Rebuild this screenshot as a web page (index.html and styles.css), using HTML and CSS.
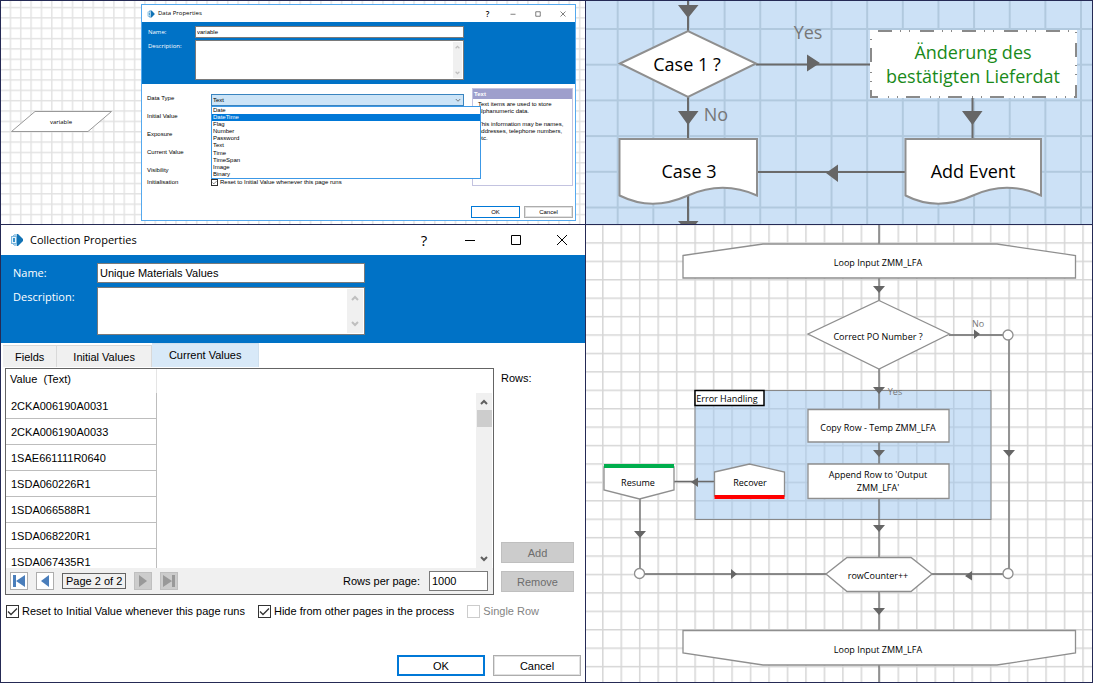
FILE: index.html
```
<!DOCTYPE html>
<html lang="en">
<head>
    <meta charset="UTF-8">
    <meta name="viewport" content="width=device-width, initial-scale=1.0">
    <title>Process Studio</title>
    <link rel="stylesheet" href="styles.css">
</head>
<body>

    <!-- shared shapes -->
    <svg class="defs" aria-hidden="true">
        <symbol id="logo" viewBox="0 0 14 14">
            <path d="M5 1h3l5 5v2l-5 5H5l-2-2V3z" fill="#1273b5"/>
            <path d="M1 3h6v8H1z" fill="#7db8df"/>
            <path d="M2 4h4v6H2z" fill="#e8f4fb"/>
            <path d="M3 5h2v4H3z" fill="#3a94cc"/>
            <path d="M4 1h3v2H4zM4 11h3v2H4z" fill="#a9d0ea"/>
        </symbol>
        <symbol id="min" viewBox="0 0 12 12"><path d="M1 6.500h10" stroke="#000" fill="none"/></symbol>
        <symbol id="max" viewBox="0 0 12 12"><path d="M1.500 1.500h9v9h-9z" stroke="#000" fill="none"/></symbol>
        <symbol id="close" viewBox="0 0 12 12"><path d="M1 1l10 10M11 1L1 11" stroke="#000" fill="none"/></symbol>
        <symbol id="up" viewBox="0 0 8 6"><path d="M1 5l3-3 3 3" stroke="currentColor" stroke-width="2" fill="none"/></symbol>
        <symbol id="down" viewBox="0 0 8 6"><path d="M1 1l3 3 3-3" stroke="currentColor" stroke-width="2" fill="none"/></symbol>
    </svg>

    <main class="board">

        <section class="panel canvas">
            <svg class="canvas-bg" viewBox="1 1 584 223" preserveAspectRatio="xMinYMin slice">
                <defs>
                    <pattern id="grid-s" x="9.600" y="6.800" width="10.350" height="10.350" patternUnits="userSpaceOnUse">
                        <path d="M.8 0v10.350M0 .8h10.350" stroke="#e2e2e2" stroke-width="1.400"/>
                    </pattern>
                </defs>
                <rect x="1" y="1" width="584" height="223" fill="url(#grid-s)"/>
                <path d="M35 111.500h76.500L88 131.500H11.500z" fill="#fff" stroke="#999"/>
                <text class="t-tiny" x="61" y="124">variable</text>
            </svg>

            <form class="dialog small">
                <header class="titlebar">
                    <svg class="logo"><use href="#logo"/></svg>
                    <h2>Data Properties</h2>
                    <button type="button" class="win" aria-label="Help">?</button>
                    <button type="button" class="win" aria-label="Minimize"><svg><use href="#min"/></svg></button>
                    <button type="button" class="win" aria-label="Maximize"><svg><use href="#max"/></svg></button>
                    <button type="button" class="win" aria-label="Close"><svg><use href="#close"/></svg></button>
                </header>
                <div class="banner">
                    <label for="d-name">Name:</label>
                    <input id="d-name" type="text" value="variable">
                    <label for="d-desc">Description:</label>
                    <div class="area">
                        <textarea id="d-desc"></textarea>
                        <div class="scroll off"><svg><use href="#up"/></svg><svg><use href="#down"/></svg></div>
                    </div>
                </div>
                <div class="data-body">
                    <div class="names">
                        <label for="d-type">Data Type</label>
                        <span>Initial Value</span>
                        <span>Exposure</span>
                        <span>Current Value</span>
                        <span>Visibility</span>
                        <span class="near">Initialisation</span>
                    </div>
                    <div class="values">
                        <div class="combo">
                            <select id="d-type"><option>Text</option></select>
                            <svg class="chev" viewBox="0 0 8 6"><path d="M1 1l3 3 3-3" stroke="#555" fill="none"/></svg>
                            <ul class="options">
                                <li>Date</li>
                                <li class="active">DateTime</li>
                                <li>Flag</li>
                                <li>Number</li>
                                <li>Password</li>
                                <li>Text</li>
                                <li>Time</li>
                                <li>TimeSpan</li>
                                <li>Image</li>
                                <li>Binary</li>
                            </ul>
                        </div>
                        <label class="check"><input type="checkbox" checked>Reset to Initial Value whenever this page runs</label>
                    </div>
                    <aside class="hint">
                        <h3>Text</h3>
                        <p>Text items are used to store alphanumeric data.</p>
                        <p>This information may be names, addresses, telephone numbers, etc.</p>
                    </aside>
                </div>
                <footer class="actions">
                    <button type="button" class="primary">OK</button>
                    <button type="button">Cancel</button>
                </footer>
            </form>
        </section>

        <section class="panel">
            <svg class="flow" viewBox="586 1 506 223" preserveAspectRatio="xMinYMin slice">
                <defs>
                    <pattern id="grid-l" x="616.700" y="28" width="35.640" height="35.700" patternUnits="userSpaceOnUse">
                        <path d="M1 0v36M0 1h36" stroke="#b1c9de" stroke-width="2"/>
                    </pattern>
                </defs>
                <rect x="586" y="1" width="507" height="224" fill="#cce1f6"/>
                <rect x="586" y="1" width="507" height="224" fill="url(#grid-l)"/>
                <g class="wire thick">
                    <path d="M688 1v30M688 97v42M688 195v30M756 64.500h115M757 172h149M972.500 97v42"/>
                </g>
                <g class="arrow">
                    <path d="M678 5h20.500L688 18zM678 111h20.500L688 125zM678 221h20.500l-5 6h-10zM807 54.500v17l13-8.500zM838 164.500v17.500l-12-9zM962 111h20.500l-10 14z"/>
                </g>
                <g class="node thick">
                    <path d="M620 63.500L688 31l68 32.500L688 97z"/>
                    <path d="M619.500 139H757v56.500c-22-10-44-11-69 0s-46 11-68.500 0z"/>
                    <path d="M905.500 139H1041v56.500c-22-10-44-11-68 0s-46 11-67.500 0z"/>
                </g>
                <rect x="871" y="31" width="205" height="66" fill="#fff" stroke="#fff" stroke-width="2"/>
                <rect x="871" y="31" width="205" height="66" fill="none" stroke="#8a8a8a" stroke-width="2" stroke-dasharray="14 8 1 8 1 10" stroke-dashoffset="-7"/>
                <g class="t-big">
                    <text x="687" y="71">Case 1 ?</text>
                    <text x="689" y="178">Case 3</text>
                    <text x="973" y="178">Add Event</text>
                    <text class="muted" x="808" y="39">Yes</text>
                    <text class="muted" x="716" y="121">No</text>
                    <text class="green" x="973" y="59">Änderung des</text>
                    <text class="green" x="973" y="83">bestätigten Lieferdat</text>
                </g>
            </svg>
        </section>

        <section class="panel">
            <form class="dialog large">
                <header class="titlebar">
                    <svg class="logo"><use href="#logo"/></svg>
                    <h2>Collection Properties</h2>
                    <button type="button" class="win" aria-label="Help">?</button>
                    <button type="button" class="win" aria-label="Minimize"><svg><use href="#min"/></svg></button>
                    <button type="button" class="win" aria-label="Maximize"><svg><use href="#max"/></svg></button>
                    <button type="button" class="win" aria-label="Close"><svg><use href="#close"/></svg></button>
                </header>
                <div class="banner">
                    <label for="c-name">Name:</label>
                    <input id="c-name" type="text" value="Unique Materials Values">
                    <label for="c-desc">Description:</label>
                    <div class="area">
                        <textarea id="c-desc"></textarea>
                        <div class="scroll off"><svg><use href="#up"/></svg><svg><use href="#down"/></svg></div>
                    </div>
                </div>
                <nav class="tabs">
                    <button type="button">Fields</button>
                    <button type="button">Initial Values</button>
                    <button type="button" class="current">Current Values</button>
                </nav>
                <div class="rows">
                    <div class="sheet">
                        <div class="sheet-body">
                            <table>
                                <thead><tr><th>Value &nbsp;(Text)</th></tr></thead>
                                <tbody>
                                    <tr><td>2CKA006190A0031</td></tr>
                                    <tr><td>2CKA006190A0033</td></tr>
                                    <tr><td>1SAE661111R0640</td></tr>
                                    <tr><td>1SDA060226R1</td></tr>
                                    <tr><td>1SDA066588R1</td></tr>
                                    <tr><td>1SDA068220R1</td></tr>
                                    <tr><td>1SDA067435R1</td></tr>
                                </tbody>
                            </table>
                            <div class="scroll">
                                <svg><use href="#up"/></svg>
                                <span class="thumb"></span>
                                <svg><use href="#down"/></svg>
                            </div>
                        </div>
                        <div class="pager">
                            <button type="button" aria-label="First page"><svg viewBox="0 0 14 14"><path d="M1 1h3v12H1zM13 1v12L4 7z"/></svg></button>
                            <button type="button" aria-label="Previous page"><svg viewBox="0 0 14 14"><path d="M11 1v12L3 7z"/></svg></button>
                            <output>Page 2 of 2</output>
                            <button type="button" disabled aria-label="Next page"><svg viewBox="0 0 14 14"><path d="M3 1v12l8-6z"/></svg></button>
                            <button type="button" disabled aria-label="Last page"><svg viewBox="0 0 14 14"><path d="M1 1v12l9-6zM10 1h3v12h-3z"/></svg></button>
                            <label for="per-page">Rows per page:</label>
                            <input id="per-page" type="text" value="1000">
                        </div>
                    </div>
                    <div class="side">
                        <span>Rows:</span>
                        <button type="button" disabled>Add</button>
                        <button type="button" disabled>Remove</button>
                    </div>
                </div>
                <div class="checks">
                    <label class="check"><input type="checkbox" checked>Reset to Initial Value whenever this page runs</label>
                    <label class="check"><input type="checkbox" checked>Hide from other pages in the process</label>
                    <label class="check off"><input type="checkbox" disabled>Single Row</label>
                </div>
                <footer class="actions">
                    <button type="button" class="primary">OK</button>
                    <button type="button">Cancel</button>
                </footer>
            </form>
        </section>

        <section class="panel">
            <svg class="flow" viewBox="586 225 506 457" preserveAspectRatio="xMinYMin slice">
                <defs>
                    <pattern id="grid-m" x="602" y="242.200" width="18.470" height="18.420" patternUnits="userSpaceOnUse">
                        <path d="M.8 0v18.500M0 .8h18.500" stroke="#d6d6d6" stroke-width="1.500"/>
                    </pattern>
                </defs>
                <rect x="586" y="225" width="507" height="458" fill="url(#grid-m)"/>
                <rect x="695" y="390.500" width="296" height="129" fill="#99c3ed" fill-opacity=".5" stroke="#888"/>
                <g class="wire">
                    <path d="M879 225v19M879 278v23M879 369v41M879 442v22M879 498v60M879 591v40M879 665v18"/>
                    <path d="M949 335h55M1009 340v229M931 574h73M645 574h181M640 499v70M674 481.500h41"/>
                </g>
                <g class="arrow">
                    <path d="M873 286h12l-6 7zM873 387h12l-6 7zM873 450h12l-6 7zM873 525h12l-6 7zM873 608h12l-6 7z"/>
                    <path d="M1003 450h12l-6 7zM634 531h12l-6 7zM974 329.500v9.500l6-5zM731 569v10l6-5zM972 571v9.500l-7-4.500zM698 477.500v9.500l-7-5z"/>
                </g>
                <g class="node">
                    <path d="M683 255.500l80-11.500h234l78.500 11.500V278H683z"/>
                    <path d="M879 300.500l70.500 33.500L879 369l-71-35z"/>
                    <path d="M808 409.500h141V442H808z"/>
                    <path d="M808 464h141v34.500H808z"/>
                    <path d="M714.500 472l35-8 35 8v24h-70z"/>
                    <path d="M604 467h70v23l-34.500 9-35.500-9z"/>
                    <path d="M826 574l21-16.500h64l21 16.500-21 17.500h-64z"/>
                    <path d="M683 630.500h392.500V653L997 665H763l-80-12z"/>
                    <circle cx="1008" cy="335" r="5"/>
                    <circle cx="1008" cy="573.500" r="5"/>
                    <circle cx="639.500" cy="573.500" r="5"/>
                </g>
                <path d="M604 464h70v4h-70z" fill="#00ae4d"/>
                <path d="M714.500 495h70v4h-70z" fill="#f00"/>
                <rect x="695" y="390.500" width="69" height="15" fill="#fff" stroke="#000" stroke-width="1.500"/>
                <g class="t-small">
                    <text x="878" y="266">Loop Input ZMM_LFA</text>
                    <text x="878" y="340">Correct PO Number ?</text>
                    <text x="727" y="402">Error Handling</text>
                    <text x="878" y="431">Copy Row - Temp ZMM_LFA</text>
                    <text x="878" y="478">Append Row to 'Output</text>
                    <text x="878" y="491">ZMM_LFA'</text>
                    <text x="638" y="486">Resume</text>
                    <text x="750" y="486">Recover</text>
                    <text x="878" y="579">rowCounter++</text>
                    <text x="878" y="653">Loop Input ZMM_LFA</text>
                    <text class="muted" x="978" y="327">No</text>
                    <text class="muted" x="895" y="395">Yes</text>
                </g>
            </svg>
        </section>

    </main>

</body>
</html>
```
FILE: styles.css
```
* {
    box-sizing: border-box;
}

body {
    margin: 0;
    background: #252a55;
    color: #000;
    font-family: "Liberation Sans", Arial, sans-serif;
}

.defs {
    position: absolute;
    width: 0;
    height: 0;
}

.board {
    display: grid;
    grid-template-columns: 584fr 506fr;
    grid-template-rows: 223fr 457fr;
    gap: 1px;
    padding: 1px;
    height: 100vh;
}

.panel {
    min-width: 0;
    min-height: 0;
    overflow: hidden;
    background: #fff;
}

.flow {
    display: block;
    width: 100%;
    height: 100%;
}

.canvas {
    position: relative;
    display: flex;
    padding: 3px 9px 3px 140px;
}

.canvas-bg {
    position: absolute;
    inset: 0;
    width: 100%;
    height: 100%;
}

/* flow chart */
.wire {
    fill: none;
    stroke: #6a6a6a;
    stroke-width: 1.3;
}

.node {
    fill: #fff;
    stroke: #8f8f8f;
    stroke-width: 1.3;
}

.wire.thick, .node.thick {
    stroke-width: 2;
}

.arrow {
    fill: #666;
}

text {
    text-anchor: middle;
    font-family: "Open Sans", sans-serif;
}

.t-tiny { font-size: 6px; }
.t-small { font-size: 9px; }
.t-big { font-size: 18px; }

.muted { fill: #777; }
.green { fill: #1a8a1a; }

/* dialogs */
.dialog {
    position: relative;
    display: flex;
    flex-direction: column;
    flex: 1;
    background: #fff;
}

.dialog input, .dialog textarea, .dialog select, .dialog button {
    font: inherit;
    color: inherit;
    border-radius: 0;
    margin: 0;
}

.titlebar {
    display: flex;
    align-items: center;
    flex: none;
}

.titlebar h2 {
    flex: 1;
    margin: 0;
    font-family: "Open Sans", sans-serif;
    font-weight: normal;
}

.win {
    display: flex;
    align-items: center;
    justify-content: center;
    padding: 0;
    border: 0;
    background: none;
}

.titlebar .win {
    font-family: "Open Sans", sans-serif;
}

.banner {
    display: grid;
    flex: none;
    align-content: start;
    background: #0072c6;
}

.banner label {
    color: #fff;
    font-family: "Open Sans", sans-serif;
}

.banner > input, .area {
    border: 1px solid #7a7a7a;
    background: #fff;
}

.area {
    display: flex;
    padding: 1px;
}

.area textarea {
    flex: 1;
    min-width: 0;
    border: 0;
    resize: none;
    overflow: hidden;
}

.scroll {
    display: flex;
    flex-direction: column;
    justify-content: space-between;
    align-items: center;
    background: #f0f0f0;
    color: #606060;
}

.scroll.off {
    color: #bfbfbf;
}

.check {
    display: flex;
    align-items: center;
    white-space: nowrap;
}

.check .dialog input, .check input {
    appearance: none;
    flex: none;
    border: 1px solid #333;
    background: #fff;
}

.check input:checked {
    background: #fff url("data:image/svg+xml,%3Csvg xmlns='http://www.w3.org/2000/svg' viewBox='0 0 11 11'%3E%3Cpath d='M1 5.500l3 3 6-6' fill='none' stroke='%23333' stroke-width='1.300'/%3E%3C/svg%3E");
}

.check.off {
    color: #838383;
}

.check.off input {
    border-color: #ccc;
}

.actions {
    display: flex;
    justify-content: flex-end;
    margin-top: auto;
}

.actions button {
    padding: 0;
    border: 1px solid #adadad;
    background: #fff;
    box-shadow: inset 0 0 0 1px #e1e1e1;
}

.actions .primary {
    border: 2px solid #0078d7;
    box-shadow: none;
}

/* data properties */
.small {
    border: 1px solid #55a9ee;
    font-size: 6px;
    line-height: 7px;
}

.small .titlebar {
    height: 17px;
    padding-left: 5px;
}

.small .logo {
    width: 8px;
    height: 8px;
    margin-right: 3px;
}

.small h2, .small .banner label {
    font-size: 6px;
}

.small .win {
    width: 25px;
    height: 16px;
    font-size: 8px;
    font-weight: 600;
}

.small .win svg {
    width: 6px;
    height: 6px;
}

.small .banner {
    grid-template-columns: 47px 269px;
    gap: 2px 0;
    height: 62px;
    padding: 4px 6px;
}

.small .banner label {
    line-height: 12px;
}

.small .banner > input {
    height: 12px;
    padding: 0 1px;
}

.small .area {
    height: 40px;
}

.small .scroll {
    width: 9px;
    padding: 3px 0;
}

.small .scroll svg {
    width: 5px;
    height: 4px;
}

.data-body {
    display: flex;
    padding: 4px 2px 0 5px;
}

.names {
    display: flex;
    flex-direction: column;
    gap: 11px;
    width: 64px;
    padding-top: 7px;
}

.names .near {
    margin-top: -6px;
}

.values {
    display: flex;
    flex-direction: column;
    justify-content: space-between;
    width: 253px;
    height: 98px;
    padding-top: 6px;
}

.combo {
    position: relative;
}

.combo select {
    display: block;
    appearance: none;
    width: 100%;
    height: 12px;
    padding: 0 1px;
    border: 1px solid #3a85c0;
    background: #cce4f7;
}

.chev {
    position: absolute;
    top: 4px;
    right: 3px;
    width: 6px;
    height: 5px;
}

.options {
    position: absolute;
    z-index: 1;
    top: 12px;
    left: 0;
    display: flex;
    flex-direction: column;
    width: 270px;
    height: 73px;
    margin: 0;
    padding: 0;
    border: 1px solid #3c98e6;
    background: #fff;
    list-style: none;
}

.options li {
    flex: 1;
    padding-left: 1px;
}

.options .active {
    background: #0078d7;
    color: #fff;
}

.small .check input {
    width: 7px;
    height: 7px;
    margin-right: 2px;
}

.hint {
    flex: 1;
    height: 98px;
    margin-left: 8px;
    border: 1px solid #c3c3e0;
}

.hint h3 {
    margin: 0 0 2px;
    padding-left: 1px;
    background: #9e9fcc;
    color: #fff;
    font-size: 6px;
    line-height: 10px;
}

.hint p {
    margin: 0 2px 6px 5px;
}

.small .actions {
    gap: 4px;
    padding: 0 2px 2px;
}

.small .actions button {
    width: 49px;
    height: 12px;
}

.small .actions .primary {
    border-width: 1px;
}

/* collection properties */
.large {
    height: 100%;
    font-size: 11px;
    line-height: 16px;
}

.large .titlebar {
    height: 30px;
    padding-left: 9px;
}

.large .logo {
    width: 14px;
    height: 14px;
    margin-right: 6px;
}

.large h2, .large .banner label {
    font-size: 11px;
}

.large .win {
    width: 46px;
    height: 30px;
    font-size: 15px;
}

.large .win svg {
    width: 12px;
    height: 12px;
}

.large .banner {
    grid-template-columns: 84px 268px;
    gap: 4px 0;
    height: 88px;
    padding: 8px 12px;
}

.large .banner label {
    line-height: 20px;
}

.large .banner > input {
    height: 20px;
    padding: 0 2px;
}

.large .area {
    height: 48px;
}

.large .scroll {
    width: 16px;
    padding: 6px 0;
}

.large .scroll svg {
    width: 8px;
    height: 6px;
}

.tabs {
    display: flex;
    align-items: flex-end;
    height: 25px;
    padding: 0 2px 1px;
}

.tabs button {
    height: 22px;
    padding: 0 16px;
    border: 1px solid #d9d9d9;
    border-width: 1px 1px 0 0;
    background: #f0f0f0;
}

.tabs button:first-child {
    padding: 0 12px;
}

.tabs .current {
    height: 24px;
    padding: 0 17px 2px;
    border-color: #cfe0ee;
    background: #d8e9f8;
}

.rows {
    display: flex;
    gap: 7px;
    padding: 0 11px 0 4px;
}

.sheet {
    flex: 1;
    border: 1px solid #646464;
}

.sheet-body {
    display: flex;
    justify-content: space-between;
    height: 199px;
    overflow: hidden;
}

.sheet table {
    align-self: flex-start;
    width: 151px;
    border-collapse: separate;
    border-spacing: 0;
}

.sheet th {
    height: 24px;
    padding: 0 4px 4px;
    border-right: 1px solid #e5e5e5;
    font-weight: normal;
    text-align: left;
}

.sheet td {
    height: 26px;
    padding: 0 5px;
    border: 1px solid #bdbdbd;
    border-width: 0 1px 1px 0;
}

.sheet .scroll {
    margin-top: 24px;
    margin-right: 1px;
}

.sheet .thumb {
    width: 15px;
    height: 17px;
    margin: 5px 0 auto;
    background: #cdcdcd;
}

.pager {
    display: flex;
    align-items: center;
    height: 26px;
    padding: 0 5px 0 4px;
    background: #f0f0f0;
}

.pager button {
    display: flex;
    width: 18px;
    height: 18px;
    margin-right: 8px;
    padding: 1px;
    border: 1px solid #adadad;
    background: #fff;
    fill: #4a7ebb;
}

.dialog .pager button {
    margin-right: 8px;
}

.pager button:disabled {
    border-color: #bfbfbf;
    background: #ccc;
    fill: #999;
}

.pager output {
    margin-right: 8px;
    padding: 0 3px;
    border: 1px solid #646464;
    line-height: 14px;
}

.pager label {
    margin-left: auto;
}

.dialog .pager input {
    width: 59px;
    height: 20px;
    margin-left: 9px;
    padding: 0 2px;
    border: 1px solid #7a7a7a;
}

.side {
    display: flex;
    flex-direction: column;
    width: 73px;
    padding: 2px 0 3px;
}

.side span {
    margin-bottom: auto;
}

.dialog .side button {
    height: 21px;
    margin-top: 8px;
    padding: 0;
    border: 1px solid #bfbfbf;
    background: #ccc;
    color: #6d6d6d;
}

.checks {
    display: flex;
    gap: 13px;
    padding: 8px 5px;
}

.large .check input {
    width: 13px;
    height: 13px;
    margin-right: 3px;
}

.large .actions {
    gap: 8px;
    padding: 0 4px 6px;
}

.large .actions button {
    width: 88px;
    height: 21px;
}
```
